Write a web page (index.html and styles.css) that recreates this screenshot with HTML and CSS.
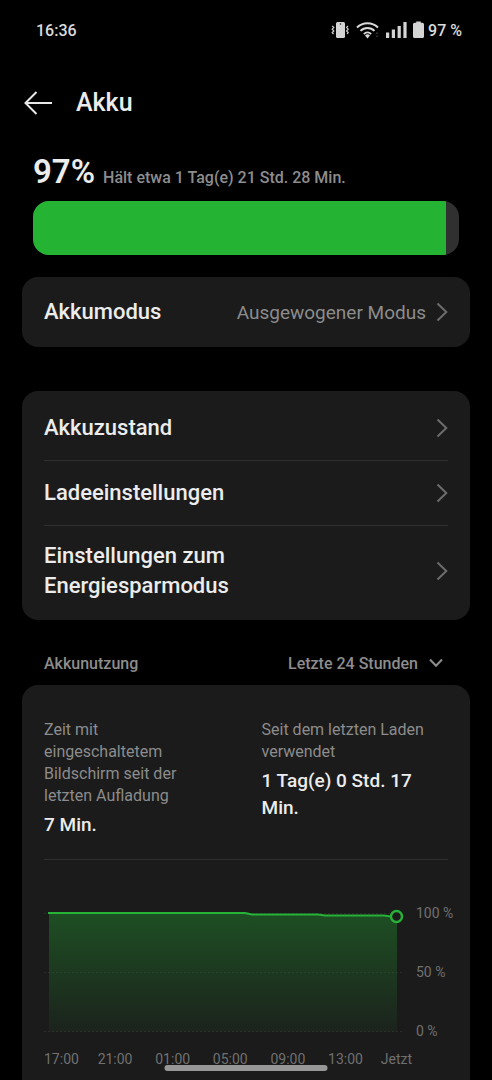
FILE: index.html
```html
<!DOCTYPE html>
<html lang="de">
<head>
  <meta charset="utf-8">
  <meta name="viewport" content="width=device-width, initial-scale=1">
  <title>Akku</title>
  <link rel="stylesheet" href="styles.css">
</head>
<body>
  <div class="status-bar">
    <time class="clock">16:36</time>
    <div class="status-icons">
      <svg class="icon-vibrate" width="18" height="18" viewBox="0 0 18 18" aria-hidden="true">
        <rect x="5" y="1" width="9" height="16" rx="1.5" fill="#d4d4d4"/>
        <circle cx="9.500" cy="3" r=".8" fill="#222"/>
        <path d="M1.200 5 2.800 6.500 1.200 8.200 2.800 9.900 1.200 11.500 2.500 13M17 5 15.600 6.500 17.200 8.200 15.600 9.900 17.200 11.500 16 13" fill="none" stroke="#d4d4d4" stroke-width="1.200"/>
      </svg>
      <svg class="icon-wifi" width="24" height="18" viewBox="0 0 24 18" aria-hidden="true">
        <path d="M1 6.500a14.800 14.800 0 0 1 21 0M4.500 9.900a9.900 9.900 0 0 1 14 0M7.900 13.100a5.100 5.100 0 0 1 7.200 0" fill="none" stroke="#d8d8d8" stroke-width="2"/>
        <path d="M9 14.600a3.500 3.500 0 0 1 5 0L11.500 17.600z" fill="#d8d8d8"/>
        <path d="m19.300 13 1.700-2 1.700 2zM19.300 14.500l1.700 2 1.700-2z" fill="#333"/>
      </svg>
      <svg class="icon-signal" width="21" height="18" viewBox="0 0 21 18" aria-hidden="true">
        <path d="M0 11.500h3.200V17H0zM5.800 8.500H9V17H5.800zM11.600 5h3.200v12h-3.200zM17.400 1h3.200v16h-3.200z" fill="#d4d4d4"/>
      </svg>
      <svg class="icon-battery" width="11" height="18" viewBox="0 0 11 18" aria-hidden="true">
        <path d="M3.200.5h4.600v1.300h1.600Q11 1.800 11 3.400v12q0 1.600-1.600 1.600H1.600Q0 17 0 15.400v-12Q0 1.800 1.600 1.800h1.600z" fill="#d4d4d4"/>
      </svg>
      <span>97 %</span>
    </div>
  </div>

  <header class="header">
    <button class="back" type="button" aria-label="Zurück">
      <svg width="30" height="24" viewBox="0 0 30 24" aria-hidden="true">
        <path d="M12.500 1 1.500 12l11 11M1.500 12H28" fill="none" stroke="#e8e8e8" stroke-width="2"/>
      </svg>
    </button>
    <h1 class="title">Akku</h1>
  </header>

  <main class="content">
    <section class="level">
      <p class="level-text"><strong class="percent">97%</strong> <span class="remaining">Hält etwa 1 Tag(e) 21 Std. 28 Min.</span></p>
      <div class="bar" role="progressbar" aria-label="Akkustand" aria-valuenow="97" aria-valuemin="0" aria-valuemax="100">
        <div class="bar-fill" style="width: 97%"></div>
      </div>
    </section>

    <nav class="card mode-card">
      <a class="row" href="#modus">
        <span class="row-label">Akkumodus</span>
        <span class="row-value">Ausgewogener Modus</span>
        <svg class="chevron" width="12" height="20" viewBox="0 0 12 20" aria-hidden="true"><path d="M1.500 1.500 10.300 10 1.500 18.500"/></svg>
      </a>
    </nav>

    <nav class="card">
      <a class="row" href="#zustand">
        <span class="row-label">Akkuzustand</span>
        <svg class="chevron" width="12" height="20" viewBox="0 0 12 20" aria-hidden="true"><path d="M1.500 1.500 10.300 10 1.500 18.500"/></svg>
      </a>
      <a class="row" href="#laden">
        <span class="row-label">Ladeeinstellungen</span>
        <svg class="chevron" width="12" height="20" viewBox="0 0 12 20" aria-hidden="true"><path d="M1.500 1.500 10.300 10 1.500 18.500"/></svg>
      </a>
      <a class="row" href="#sparmodus">
        <span class="row-label">Einstellungen zum<br>Energiesparmodus</span>
        <svg class="chevron" width="12" height="20" viewBox="0 0 12 20" aria-hidden="true"><path d="M1.500 1.500 10.300 10 1.500 18.500"/></svg>
      </a>
    </nav>

    <div class="usage-head">
      <label for="period">Akkunutzung</label>
      <div class="period">
        <select id="period" class="period-select">
          <option>Letzte 24 Stunden</option>
        </select>
        <svg class="period-arrow" width="14" height="10" viewBox="0 0 14 10" aria-hidden="true"><path d="M1 1.500 7 7.800l6-6.300" fill="none" stroke="#8d8d8d" stroke-width="2"/></svg>
      </div>
    </div>

    <section class="usage-card">
      <dl class="stats">
        <div class="stat">
          <dt>Zeit mit eingeschaltetem Bildschirm seit der letzten Aufladung</dt>
          <dd>7 Min.</dd>
        </div>
        <div class="stat">
          <dt>Seit dem letzten Laden verwendet</dt>
          <dd>1 Tag(e) 0 Std. 17 Min.</dd>
        </div>
      </dl>

      <div class="chart">
        <svg class="plot" viewBox="0 0 362 134" role="img" aria-label="Akkuverlauf der letzten 24 Stunden">
          <defs>
            <linearGradient id="area" x1="0" y1="0" x2="0" y2="1">
              <stop offset="0" stop-color="#23b333" stop-opacity=".34"/>
              <stop offset="1" stop-color="#23b333" stop-opacity=".05"/>
            </linearGradient>
          </defs>
          <path d="M0 8.500H359M0 67.500H359M0 126.500H359" fill="none" stroke="#292b29" stroke-dasharray="2 2"/>
          <path d="M5 8H201L208 9.500H274L281 10.500H340L347 11.500H353V127H5z" fill="url(#area)"/>
          <path d="M4 8H201L208 9.500H274L281 10.500H340L347 11.500H349" fill="none" stroke="#27b337" stroke-width="2"/>
          <circle cx="352.500" cy="11.500" r="5.500" fill="#1b1b1b" stroke="#27b337" stroke-width="2.400"/>
        </svg>
        <div class="y-axis"><span>100 %</span><span>50 %</span><span>0 %</span></div>
        <div class="x-axis"><span>17:00</span><span>21:00</span><span>01:00</span><span>05:00</span><span>09:00</span><span>13:00</span><span>Jetzt</span></div>
      </div>
    </section>
  </main>

  <div class="home-indicator"></div>
</body>
</html>
```

FILE: styles.css
```css
* {
  box-sizing: border-box;
}

body {
  display: flex;
  flex-direction: column;
  min-height: 100vh;
  margin: 0;
  background: #000;
  color: #ececec;
  font-family: Roboto, "Liberation Sans", sans-serif;
  font-size: 16px;
}

h1,
p,
dl,
dd {
  margin: 0;
}

.status-bar {
  display: flex;
  align-items: center;
  justify-content: space-between;
  height: 60px;
  padding: 0 30px 0 36px;
  color: #dadada;
  font-weight: 500;
}

.status-icons {
  display: flex;
  align-items: center;
}

.icon-vibrate {
  margin-right: 7px;
}

.icon-wifi,
.icon-signal {
  margin-right: 6px;
}

.icon-battery {
  margin-right: 4px;
}

.header {
  display: flex;
  align-items: center;
  gap: 22px;
  height: 85px;
  padding: 0 24px;
}

.back {
  display: flex;
  padding: 0;
  border: 0;
  background: none;
}

.title {
  font-size: 25px;
  font-weight: 500;
  line-height: 32px;
}

.content {
  display: flex;
  flex: 1;
  flex-direction: column;
}

.level {
  padding: 6px 33px 0;
}

.level-text {
  display: flex;
  align-items: baseline;
  gap: 8px;
  height: 50px;
  line-height: 41px;
}

.percent {
  font-size: 33px;
  font-weight: 600;
}

.remaining {
  color: #8d8d8d;
  font-size: 16px;
  font-weight: 500;
}

.bar {
  height: 54px;
  overflow: hidden;
  border-radius: 16px;
  background: #303030;
}

.bar-fill {
  height: 100%;
  background: #25b334;
}

.card {
  margin: 0 22px;
  padding: 4px 22px;
  border-radius: 16px;
  background: #1b1b1b;
}

.mode-card {
  margin-top: 22px;
  margin-bottom: 44px;
}

.row {
  display: flex;
  align-items: center;
  min-height: 65px;
  padding: 15px 0;
  color: inherit;
  text-decoration: none;
}

.mode-card .row {
  min-height: 62px;
}

.row + .row {
  border-top: 1px solid #303030;
}

.row-label {
  flex: 1;
  font-size: 22px;
  font-weight: 500;
  line-height: 30px;
}

.row-value {
  margin-right: 10px;
  color: #8c8c8c;
  font-size: 19px;
}

.chevron {
  flex: none;
  fill: none;
  stroke: #6c6c6c;
  stroke-width: 2;
}

.usage-head {
  display: flex;
  align-items: center;
  justify-content: space-between;
  height: 65px;
  padding: 22px 49px 0 44px;
  color: #8d8d8d;
  font-weight: 500;
}

.period {
  position: relative;
}

.period-select {
  padding: 0 25px 0 0;
  border: 0;
  appearance: none;
  background: none;
  color: inherit;
  font: inherit;
}

.period-arrow {
  position: absolute;
  top: 4px;
  right: 0;
  pointer-events: none;
}

.usage-card {
  flex: 1;
  margin: 0 22px;
  padding: 34px 22px 8px;
  border-radius: 16px 16px 0 0;
  background: #1b1b1b;
}

.stats {
  display: grid;
  grid-template-columns: 7fr 6fr;
  padding-bottom: 21px;
  border-bottom: 1px solid #303030;
}

.stat:first-child {
  padding-right: 50px;
}

.stat dt {
  color: #8c8c8c;
  line-height: 22px;
}

.stat dd {
  margin-top: 4px;
  font-size: 19px;
  font-weight: 500;
  line-height: 27px;
}

.chart {
  display: grid;
  grid-template-columns: 1fr 42px;
  margin-top: 45px;
  color: #707070;
  font-size: 14px;
}

.plot {
  display: block;
  width: 100%;
}

.y-axis {
  display: flex;
  flex-direction: column;
  justify-content: space-between;
  margin-right: -8px;
  padding-left: 10px;
  line-height: 16px;
  white-space: nowrap;
}

.x-axis {
  display: grid;
  grid-column: 1 / -1;
  grid-template-columns: 54fr 58fr 58fr 58fr 58fr 53fr auto;
  margin: 12px 36px 0 0;
  line-height: 16px;
}

.home-indicator {
  position: fixed;
  bottom: 9px;
  left: 50%;
  width: 163px;
  height: 6px;
  border-radius: 3px;
  background: #979797;
  transform: translateX(-50%);
}
```
